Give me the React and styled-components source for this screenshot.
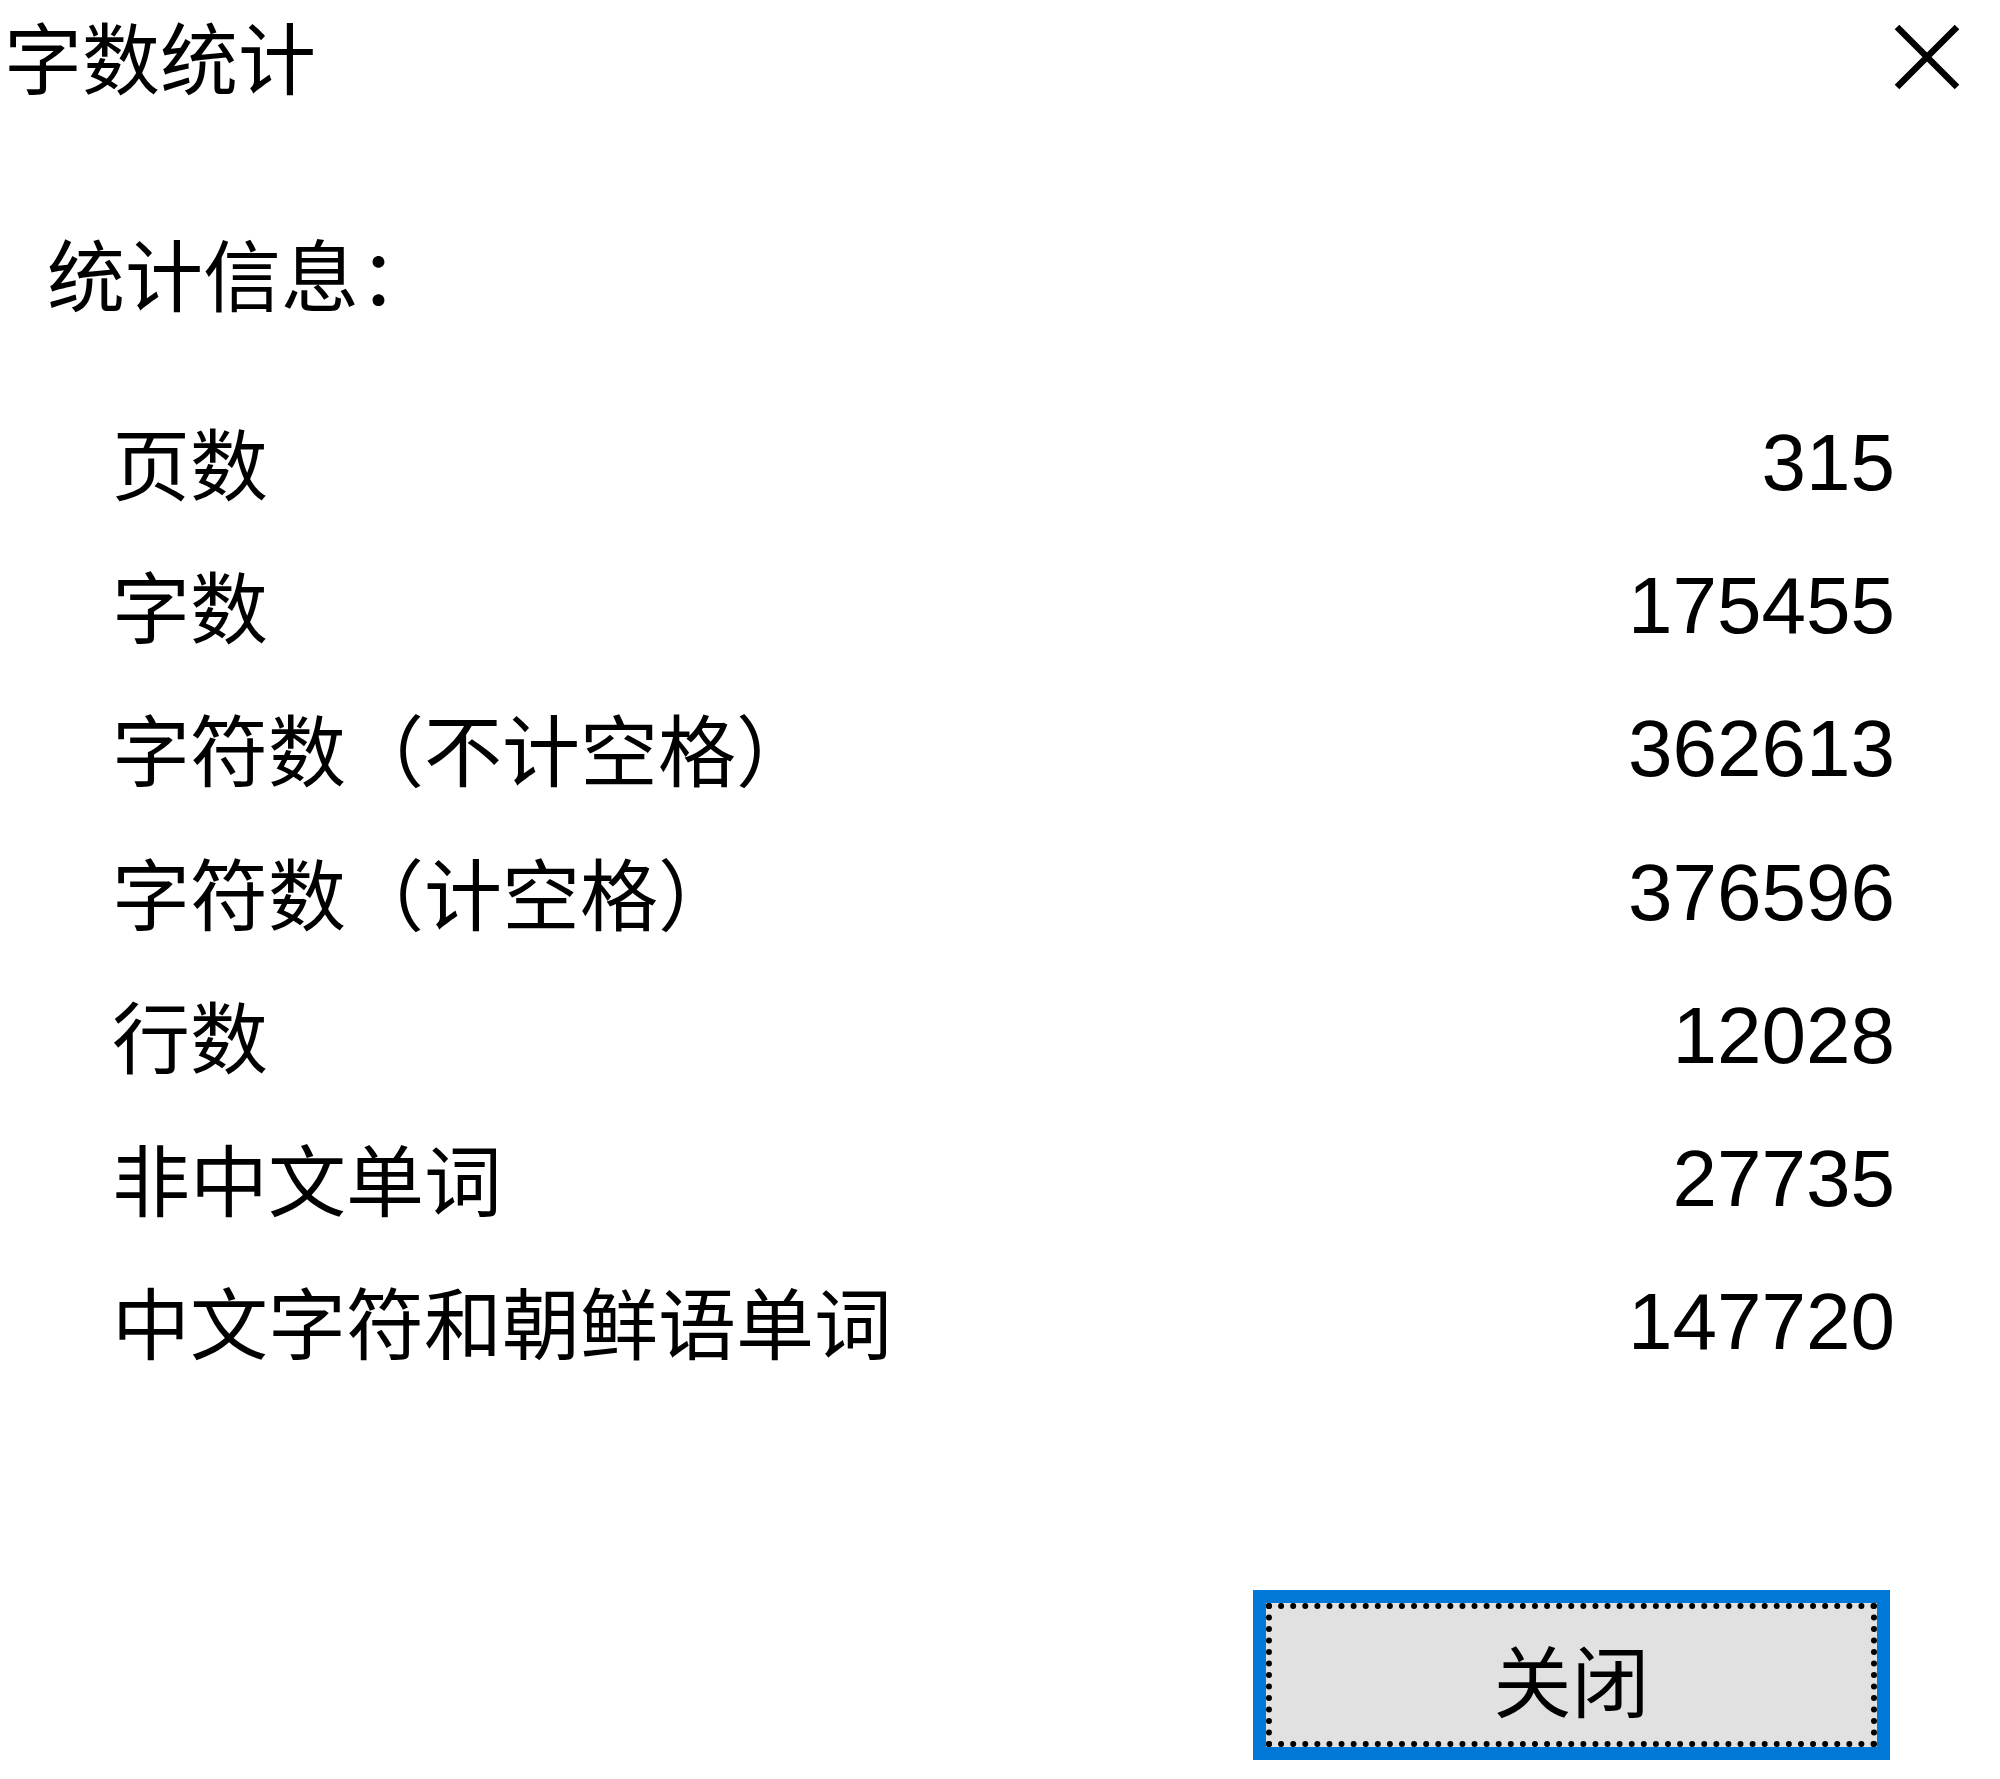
import { createGlobalStyle } from "styled-components";
import styled from "styled-components";

const cjk = `"Noto Sans CJK SC", "Noto Sans", sans-serif`;
const latin = `"Liberation Sans", "Noto Sans CJK SC", sans-serif`;

const stats = [
  { label: "页数", value: "315" },
  { label: "字数", value: "175455" },
  { label: "字符数（不计空格）", value: "362613" },
  { label: "字符数（计空格）", value: "376596" },
  { label: "行数", value: "12028" },
  { label: "非中文单词", value: "27735" },
  { label: "中文字符和朝鲜语单词", value: "147720" },
];

const GlobalStyle = createGlobalStyle`
  html, body {
    margin: 0;
    padding: 0;
    background: #ffffff;
  }
  body {
    font-family: ${cjk};
    color: #000000;
  }
`;

const Dialog = styled.div`
  width: 2000px;
  height: 1779px;
  display: flex;
  flex-direction: column;
  overflow: hidden;
  background: #ffffff;
`;

const TitleBar = styled.div`
  height: 114px;
  display: flex;
  align-items: center;
  justify-content: space-between;
  padding: 0 40px 0 4px;
`;

const Title = styled.div`
  font-family: ${cjk};
  font-size: 78px;
  line-height: 78px;
  margin-top: -4px;
`;

const CloseButton = styled.div`
  width: 66px;
  height: 66px;
  display: flex;
  align-items: center;
  justify-content: center;
`;

const SectionHeading = styled.div`
  margin: 119px 0 0 47px;
  font-size: 78px;
  line-height: 78px;
`;

const StatList = styled.div`
  margin-top: 81px;
  padding: 0 105px 0 112px;
  display: flex;
  flex-direction: column;
`;

const StatRow = styled.div`
  height: 143.3px;
  display: flex;
  align-items: center;
  justify-content: space-between;
`;

const StatLabel = styled.span`
  font-family: ${cjk};
  font-size: 78px;
  line-height: 78px;
  margin-top: -6px;
`;

const StatValue = styled.span`
  font-family: ${latin};
  font-size: 80px;
  line-height: 80px;
  margin-top: -2px;
`;

const Footer = styled.div`
  margin-top: auto;
  padding: 0 110px 19px 0;
  display: flex;
  justify-content: flex-end;
`;

const Button = styled.button`
  width: 637px;
  height: 170px;
  padding: 0;
  border: 13px solid #0078d7;
  background: #e1e1e1;
  display: flex;
  cursor: pointer;
`;

const FocusRing = styled.span`
  flex: 1;
  display: flex;
  align-items: center;
  justify-content: center;
  border: 6px dotted #000000;
  font-family: ${cjk};
  font-size: 78px;
  line-height: 78px;
  color: #000000;
  padding-top: 6px;
`;

const CloseIcon = () => (
  <svg width="66" height="66" viewBox="0 0 66 66">
    <path d="M3 3 L63 63 M63 3 L3 63" stroke="#000" strokeWidth="6.5" fill="none" />
  </svg>
);

const App = () => {
  return (
    <>
      <GlobalStyle />
      <Dialog>
        <TitleBar>
          <Title>字数统计</Title>
          <CloseButton>
            <CloseIcon />
          </CloseButton>
        </TitleBar>

        <SectionHeading>统计信息：</SectionHeading>

        <StatList>
          {stats.map((stat) => (
            <StatRow key={stat.label}>
              <StatLabel>{stat.label}</StatLabel>
              <StatValue>{stat.value}</StatValue>
            </StatRow>
          ))}
        </StatList>

        <Footer>
          <Button>
            <FocusRing>关闭</FocusRing>
          </Button>
        </Footer>
      </Dialog>
    </>
  );
};

export default App;
